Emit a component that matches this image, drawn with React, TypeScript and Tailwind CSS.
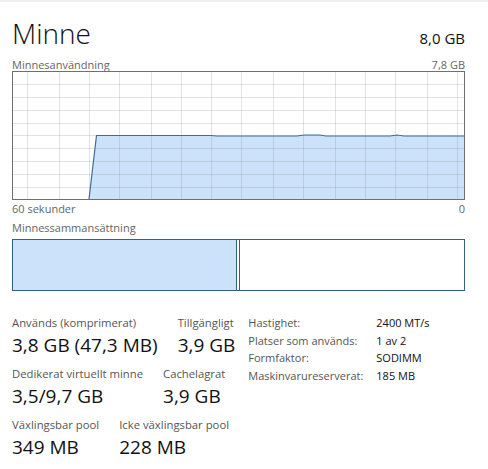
import React from "react";

const vLines = [15, 47, 77, 107, 139, 169, 199, 229, 261, 291, 323, 353, 383, 415, 445];
const hLines = [13, 26, 39, 52, 64, 77, 90, 103, 116];

function UsageGraph() {
  const pts =
    "77,128 84.5,64.5 199,64.5 205,65 285,65 292,64 308,64 314,65 378,65 385,64 392,65 452,65 452,128";
  return (
    <svg width="453" height="129" viewBox="0 0 453 129" className="block">
      <rect x="0" y="0" width="453" height="129" fill="#ffffff" />
      <polygon points={pts} fill="#cce2fb" />
      {vLines.map((x) => (
        <line key={"v" + x} x1={x + 0.5} y1="0" x2={x + 0.5} y2="129" stroke="#8a8a8a" strokeOpacity="0.25" strokeWidth="1" />
      ))}
      {hLines.map((y) => (
        <line key={"h" + y} x1="0" y1={y + 0.5} x2="453" y2={y + 0.5} stroke="#8a8a8a" strokeOpacity="0.25" strokeWidth="1" />
      ))}
      <polyline
        points="77,128 84.5,64.5 199,64.5 205,65 285,65 292,64 308,64 314,65 378,65 385,64 392,65 452,65"
        fill="none"
        stroke="#3d6f96"
        strokeWidth="1.2"
      />
      <rect x="0.5" y="0.5" width="452" height="128" fill="none" stroke="#6f6f6f" strokeWidth="1" />
    </svg>
  );
}

function Stat({ label, value }: { label: string; value: string }) {
  return (
    <div className="flex flex-col">
      <div className="text-[11.3px] leading-[19px] text-[#555]">{label}</div>
      <div className="text-[19px] leading-[26px] text-[#111]">{value}</div>
    </div>
  );
}

export default function App() {
  return (
    <div
      className="w-[488px] h-[469px] bg-white overflow-hidden relative"
      style={{ fontFamily: '"Open Sans", "Noto Sans", sans-serif' }}
    >
      <div className="h-[2px] bg-[#f0f0f0]" />
      <div className="px-3 w-[477px]">
        <div className="flex items-end justify-between h-[49px]">
          <div className="text-[28px] leading-[36px] text-[#111] font-light">Minne</div>
          <div className="text-[15px] leading-[20px] text-[#111] mb-[3px]">8,0 GB</div>
        </div>
        <div className="flex justify-between text-[11px] leading-[15px] text-[#666] mt-[6px] h-[15px]">
          <span>Minnesanvändning</span>
          <span>7,8 GB</span>
        </div>
        <div className="mt-[-1px]">
          <UsageGraph />
        </div>
        <div className="flex justify-between text-[11px] leading-[15px] text-[#666] mt-[1px]">
          <span>60 sekunder</span>
          <span>0</span>
        </div>
        <div className="text-[11px] leading-[15px] text-[#666] mt-[4px]">Minnessammansättning</div>
        <div className="mt-[4px] h-[52px] w-[453px] border border-[#34617f] flex">
          <div className="w-[224px] bg-[#cce2fb] border-r border-[#34617f]" />
          <div className="w-[3px] border-r border-[#34617f]" />
          <div className="flex-1 bg-white" />
        </div>
        <div className="flex items-start mt-[22px]">
          <div className="flex flex-col gap-[6px]">
            <div className="flex gap-[20px]">
              <Stat label="Används (komprimerat)" value="3,8 GB (47,3 MB)" />
              <Stat label="Tillgängligt" value="3,9 GB" />
            </div>
            <div className="flex gap-[20px]">
              <Stat label="Dedikerat virtuellt minne" value="3,5/9,7 GB" />
              <Stat label="Cachelagrat" value="3,9 GB" />
            </div>
            <div className="flex gap-[20px]">
              <Stat label="Växlingsbar pool" value="349 MB" />
              <Stat label="Icke växlingsbar pool" value="228 MB" />
            </div>
          </div>
          <div className="ml-[13px] grid grid-cols-[128px_auto] content-start text-[11px] leading-[17.6px] mt-[1px]">
            <span className="text-[#555]">Hastighet:</span>
            <span className="text-[#111]">2400 MT/s</span>
            <span className="text-[#555]">Platser som används:</span>
            <span className="text-[#111]">1 av 2</span>
            <span className="text-[#555]">Formfaktor:</span>
            <span className="text-[#111]">SODIMM</span>
            <span className="text-[#555]">Maskinvarureserverat:</span>
            <span className="text-[#111]">185 MB</span>
          </div>
        </div>
      </div>
    </div>
  );
}
